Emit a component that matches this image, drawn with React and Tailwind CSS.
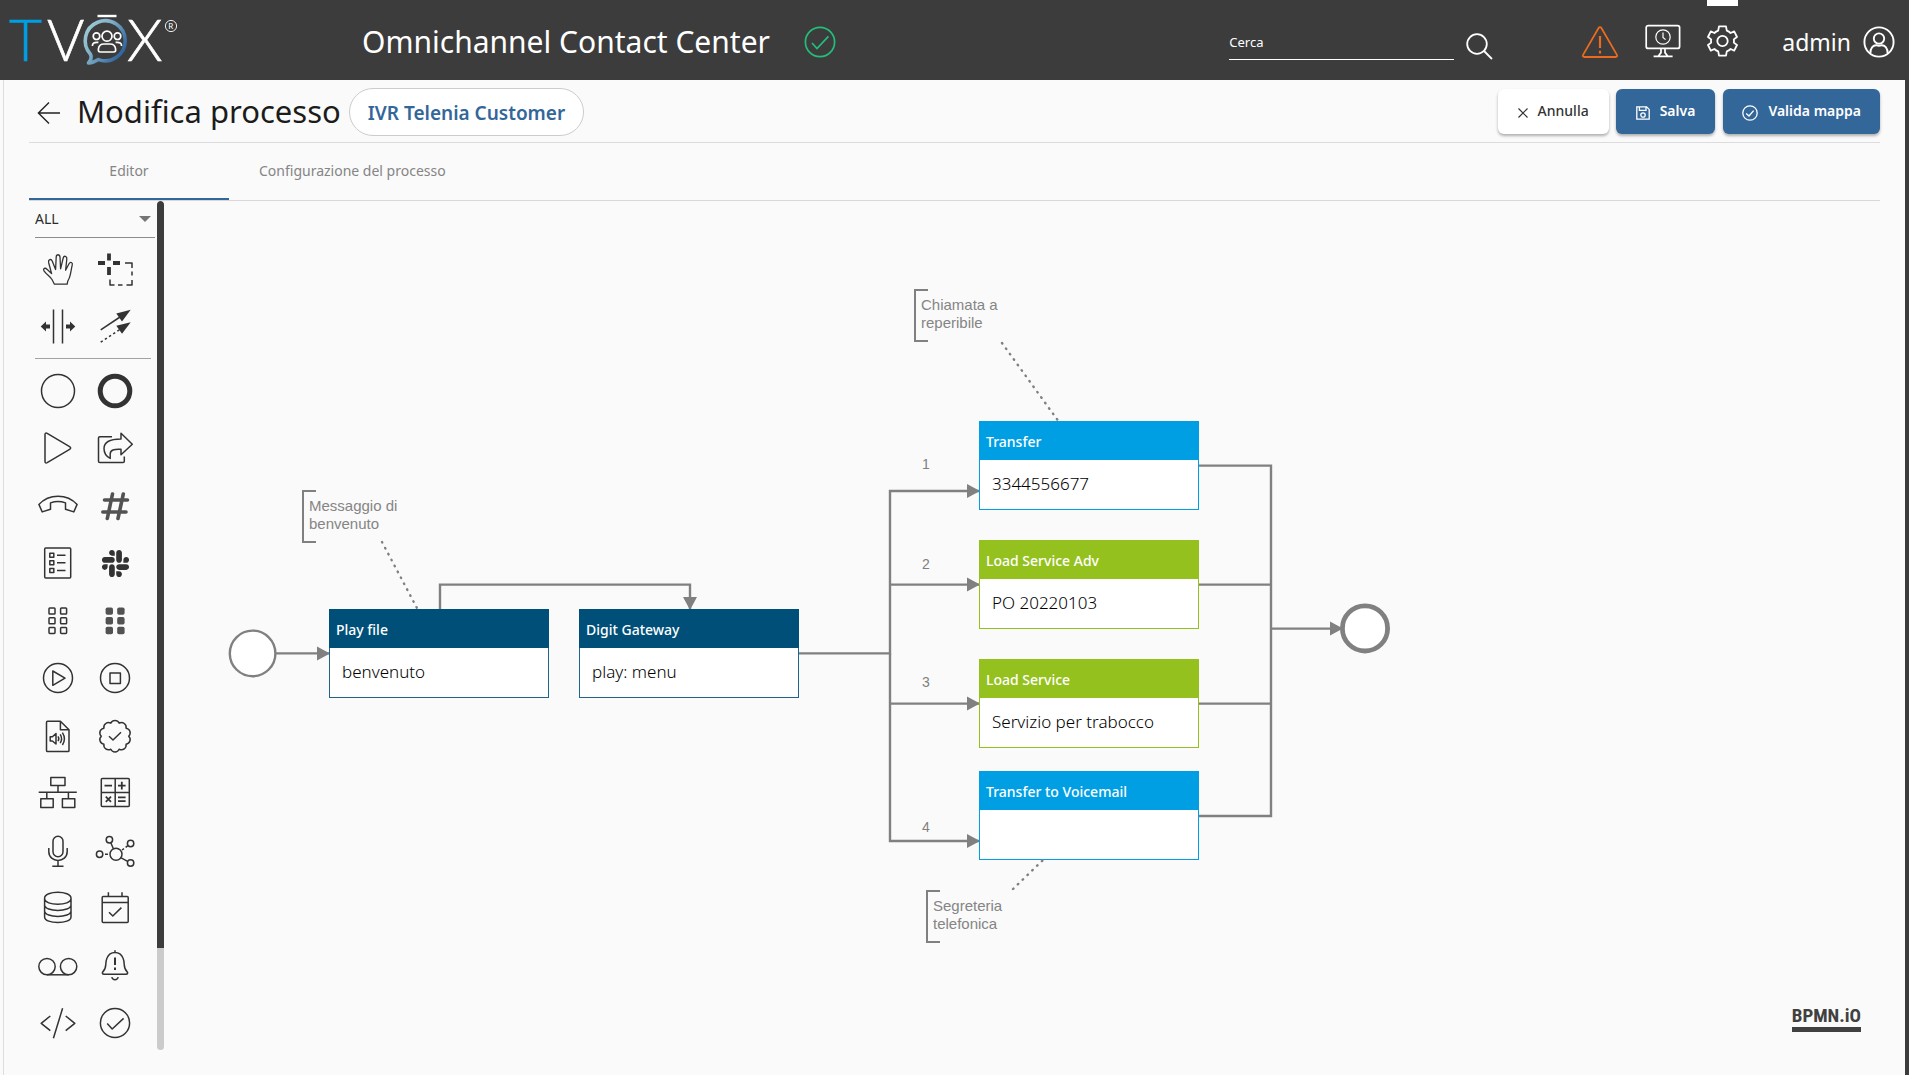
import React from "react";
import { FaSlack } from "react-icons/fa";

const INK = "#333333";

function Glyph({ children, width = 1.5 }) {
  return (
    <svg
      width="40"
      height="40"
      viewBox="0 0 40 40"
      fill="none"
      stroke={INK}
      strokeWidth={width}
      strokeLinejoin="round"
      aria-hidden="true"
    >
      {children}
    </svg>
  );
}

function scallop(cx, cy, r, bumps, arc) {
  const pts = Array.from({ length: bumps }, (_, i) => {
    const a = ((i + 0.5) / bumps) * Math.PI * 2 - Math.PI / 2;
    return `${(cx + r * Math.cos(a)).toFixed(2)} ${(cy + r * Math.sin(a)).toFixed(2)}`;
  });
  return `M${pts[bumps - 1]}` + pts.map((p) => `A${arc} ${arc} 0 0 1 ${p}`).join("") + "Z";
}

const TOOLS = [
  [
    "Mano",
    <Glyph width={1.3}>
      <path d="M16.4 34.2L14 29.5C12 26.5 8.5 24.5 6 20.8C4.8 18.4 7.2 17.4 9 19.2L13.6 23.6L10.6 12.5C10 9.5 13 8.4 14.2 11L17.6 19.5L18.2 7C18.4 4 21.6 4 22 7L22.6 18.8L25.2 8C26 5.2 29.2 6 28.8 9L27.6 20.2L31 13.8C32.4 11.2 35 12.4 34.2 15.2C33 20 32.6 26 30.8 29C29.4 31 29.4 32.4 29.2 34.2Z" />
    </Glyph>,
  ],
  [
    "Lazo",
    <Glyph>
      <path d="M3 13H10M18 13H25M14 3.5V10.5M14 17V25" strokeWidth="3.8" />
      <path d="M30 13H37V18M37 21.5V25.5M37 30V35H31.5M27.5 35H23M19.5 35H15V29.5" />
    </Glyph>,
  ],
  [
    "Spazio",
    <Glyph>
      <path d="M15.5 2.5V36.5M24.5 2.5V36.5" />
      <path d="M2.7 19.5L8 14.5V17.6H12V21.4H8V24.5ZM37.3 19.5L32 14.5V17.6H28V21.4H32V24.5Z" fill={INK} stroke="none" />
    </Glyph>,
  ],
  [
    "Connetti",
    <Glyph>
      <path d="M5.7 22.8L25 10" />
      <path d="M5.7 35.2L25 22.4" strokeDasharray="2.4 2.6" />
      <path d="M35.7 2.8L21.3 6.5L27 14.5ZM35.7 15.2L21.3 18.8L27 26.8Z" fill={INK} stroke="none" />
    </Glyph>,
  ],
];

const ELEMENTS = [
  ["Inizio", <Glyph><circle cx="20" cy="20" r="16.5" /></Glyph>],
  ["Fine", <Glyph><circle cx="20" cy="20" r="14.8" strokeWidth="5" /></Glyph>],
  [
    "Avvia",
    <Glyph><path d="M7 6.5C7 5 8 4.8 9.2 5.4L31.6 18.6C33 19.5 33 20.5 31.6 21.3L9.2 34.6C8 35.2 7 35 7 33.5Z" /></Glyph>,
  ],
  [
    "Trasferisci",
    <Glyph>
      <path d="M17 8.8H4.8Q3.5 8.8 3.5 10V33.2Q3.5 34.5 4.8 34.5H28Q29.3 34.5 29.3 33.2V28.4" />
      <path d="M26 5.3L37.3 16.2L26 26.8V21.2C19 20.8 15.2 22 15.2 26V30.4C11.6 28.6 9 25 9 20.5C9 14 14.5 11 26 11Z" />
    </Glyph>,
  ],
  [
    "Riaggancia",
    <Glyph><path d="M0.9 18.4C11 7.4 29 7.4 39.1 18.4L35.8 25.9L27.5 23.2V16.9C22.5 15 17.5 15 12.5 16.9V23.2L4.2 25.9Z" /></Glyph>,
  ],
  [
    "Cifra",
    <Glyph><path d="M17.5 8L12.3 32.5M28.3 8L23 32.5M9.5 14H32.5M7.8 26H31" stroke="#525252" strokeWidth="3.6" strokeLinecap="round" /></Glyph>,
  ],
  [
    "Elenco",
    <Glyph>
      <rect x="6.7" y="5" width="26" height="30" rx="1" />
      <path d="M11.8 10.2h4v4h-4zM11.8 17.8h4v4h-4zM11.8 25.4h4v4h-4zM19 12.2H27.5M19 19.8H27.5M19 27.4H27.5" />
    </Glyph>,
  ],
  ["Slack", <FaSlack size={31} color={INK} aria-hidden="true" />],
  [
    "Tastiera",
    <Glyph>
      {[7, 16.7, 26.4].flatMap((y) =>
        [11, 22.6].map((x) => <rect key={`${x}-${y}`} x={x} y={y} width="6" height="6" rx="0.8" />)
      )}
    </Glyph>,
  ],
  [
    "Tastiera piena",
    <Glyph>
      {[6.4, 16.1, 25.8].flatMap((y) =>
        [10.6, 22.2].map((x) => (
          <rect key={`${x}-${y}`} x={x} y={y} width="7.4" height="7.4" rx="1.8" fill="#525252" stroke="none" />
        ))
      )}
    </Glyph>,
  ],
  ["Riproduci", <Glyph><circle cx="20" cy="20" r="14.5" /><path d="M14.8 13L27 20.2L14.8 27.3Z" /></Glyph>],
  ["Ferma", <Glyph><circle cx="20" cy="20" r="14.5" /><path d="M15 15h10.4v10.4h-10.4z" /></Glyph>],
  [
    "File audio",
    <Glyph>
      <path d="M22.4 5.3H9.6Q8.5 5.3 8.5 6.4V34.4Q8.5 35.5 9.6 35.5H30Q31 35.5 31 34.4V13.8ZM22.4 5.3V13.8H31" />
      <path d="M12.2 20.8H14.4L18 17.6V28L14.4 25H12.2ZM20 20.4Q21.6 22.8 20 25.2M22.2 18.4Q25 22.8 22.2 27.2M24.4 16.6Q28.4 22.8 24.4 29" />
    </Glyph>,
  ],
  ["Verifica", <Glyph><path d={scallop(20, 20.2, 13.7, 10, 4.7)} /><path d="M14 20.2L18 24L26 16.2" /></Glyph>],
  [
    "Gerarchia",
    <Glyph>
      <path d="M12.8 4.6H27V12.6H12.8ZM20 12.6V19.3M0.7 19.3H38.8M8.8 19.3V25.8M30.4 19.3V25.8M2.8 25.8H15.2V34.6H2.8ZM24.4 25.8H36.8V34.6H24.4Z" />
    </Glyph>,
  ],
  [
    "Calcola",
    <Glyph>
      <rect x="6.3" y="5.5" width="28" height="28" rx="1" />
      <path d="M20.2 5.5V33.5M6.3 19.4H34.3" />
      <path d="M9.5 12.6H17M23 12.6H30.6M26.8 8.8V16.4M10.8 23.6L16 28.8M16 23.6L10.8 28.8M23 24.4H30.6M23 28.2H30.6" strokeWidth="1.8" />
    </Glyph>,
  ],
  [
    "Registra",
    <Glyph>
      <rect x="15" y="5.3" width="10" height="20.4" rx="5" />
      <path d="M10.8 17V20.4C10.8 32.4 29.2 32.4 29.2 20.4V17M20 29.3V35M14.3 35.2H25.5" />
    </Glyph>,
  ],
  [
    "Rete",
    <Glyph>
      <circle cx="21" cy="23.3" r="6" />
      <circle cx="14.4" cy="8.8" r="3.2" />
      <circle cx="35.6" cy="12.5" r="3.2" />
      <circle cx="4.6" cy="23.3" r="3.2" />
      <circle cx="35.6" cy="32" r="3.2" />
      <path d="M15.8 11.8L18.4 17.8M27 19L29 17.6M30.6 16.4L32.6 14.8M26.2 26.8L32.6 30.4M10 23.3H13" />
    </Glyph>,
  ],
  [
    "Database",
    <Glyph>
      <path d="M6.6 10.2C6.6 2.4 33 2.4 33 10.2V29C33 36.4 6.6 36.4 6.6 29ZM6.6 10.6C6.6 18.2 33 18.2 33 10.6M6.6 17C6.6 24.2 33 24.2 33 17M6.6 23C6.6 30.2 33 30.2 33 23" />
    </Glyph>,
  ],
  [
    "Calendario",
    <Glyph>
      <rect x="7.2" y="8.4" width="26" height="26" rx="1" />
      <path d="M7.2 14.4H33.2M13.4 4.3V8.4M27 4.3V8.4M14 24.2L17.8 28L26.4 19.6" />
    </Glyph>,
  ],
  [
    "Segreteria",
    <Glyph><circle cx="9" cy="20.6" r="8.2" /><circle cx="30.6" cy="20.6" r="8.2" /><path d="M9 28.8H30.6" /></Glyph>,
  ],
  [
    "Avviso",
    <Glyph>
      <path d="M20 4.3V6.4M9 28.2C7.4 28.2 6.8 26.8 8 25.6C12.4 21.4 9.6 17.6 12 12C13.4 8.4 16 6.4 20 6.4C24 6.4 26.6 8.4 28 12C30.4 17.6 27.6 21.4 32 25.6C33.2 26.8 32.6 28.2 31 28.2ZM16.8 31.2C17.6 34.6 22.4 34.6 23.2 31.2" />
      <path d="M20 11.6V19M20 21.4V24" strokeWidth="2" />
    </Glyph>,
  ],
  ["Codice", <Glyph><path d="M12.3 13L3.2 20.3L12.3 27.7M27.7 13L36.8 20.3L27.7 27.7M24.6 5.3L15.4 35.3" /></Glyph>],
  ["Completato", <Glyph><circle cx="20" cy="20" r="14.6" /><path d="M12.2 20.6L17.2 26L28.6 15.4" /></Glyph>],
];

function Palette({ items, className }) {
  return (
    <div className={`grid grid-cols-[58px_56px] ${className}`}>
      {items.map(([label, icon]) => (
        <button key={label} type="button" aria-label={label} className="flex items-center justify-center">
          {icon}
        </button>
      ))}
    </div>
  );
}

function Logo() {
  return (
    <svg width="180" height="80" viewBox="0 -10 180 80" role="img" aria-label="TVox">
      <defs>
        <linearGradient id="bubble" x1="0" y1="0" x2="1" y2="0.7">
          <stop offset="0" stopColor="#a5d0d6" />
          <stop offset="0.45" stopColor="#7fb0c8" />
          <stop offset="1" stopColor="#2d629c" />
        </linearGradient>
      </defs>
      <g fontFamily="Lato, sans-serif" fontWeight="300" fontSize="57" fill="#ffffff" stroke="#ffffff" strokeWidth="0.6">
        <text x="9" y="51" fill="#009fe3" stroke="#009fe3">T</text>
        <text x="47" y="51">V</text>
        <text x="127" y="51">X</text>
      </g>
      <path d="M97.5 6H116.5" stroke="#ffffff" strokeWidth="2.4" />
      <path
        d="M88.5 53C91 50 92 47.5 90.6 44.4A20 20 0 1 1 98.5 49.6C95.5 51.5 92 53.2 88.5 53Z"
        fill="none"
        stroke="url(#bubble)"
        strokeWidth="3.6"
        strokeLinejoin="round"
      />
      <g fill="none" stroke="#ffffff" strokeWidth="1.7">
        <circle cx="107" cy="26.2" r="5" />
        <circle cx="96.5" cy="26.2" r="3.3" />
        <circle cx="117.5" cy="26.2" r="3.3" />
        <path d="M100.4 42C98.6 42 98.2 41 98.4 39C98.8 35.4 100.6 34 104 34H110C113.4 34 115.2 35.4 115.6 39C115.8 41 115.4 42 113.6 42ZM92.4 36C92.4 33 94 32 98.4 32.4M121.6 36C121.6 33 120 32 115.6 32.4" />
      </g>
      <circle cx="171" cy="16" r="5.6" fill="none" stroke="#ffffff" strokeWidth="0.9" />
      <text x="168.2" y="19" fontFamily="Lato, sans-serif" fontSize="8" fill="#ffffff">R</text>
    </svg>
  );
}

function TopBar() {
  return (
    <header className="flex h-20 shrink-0 items-center bg-[#3c3c3c] pr-3.5 text-white">
      <a href="#home"><Logo /></a>
      <div className="mt-1 ml-[182px] flex items-center gap-[34px]">
        <h1 className="text-[30px] leading-10 whitespace-nowrap">Omnichannel Contact Center</h1>
        <svg width="32" height="32" viewBox="0 0 32 32" fill="none" stroke="#22bf7c" strokeWidth="1.7" aria-label="Attivo">
          <circle cx="16" cy="16" r="14.6" />
          <path d="M8 17L13 22.6L24.4 10.4" />
        </svg>
      </div>
      <form className="mt-2 ml-auto flex items-center gap-3" onSubmit={(e) => e.preventDefault()}>
        <input
          type="search"
          aria-label="Cerca"
          placeholder="Cerca"
          className="mb-1 h-9 w-[225px] border-b border-white bg-transparent text-[13px] text-white outline-none placeholder:text-white"
        />
        <button type="submit" aria-label="Avvia ricerca" className="mt-1">
          <svg width="27" height="27" viewBox="0 0 27 27" fill="none" stroke="#ffffff" strokeWidth="1.8">
            <circle cx="11" cy="11" r="9.8" />
            <path d="M18 18L26 26" />
          </svg>
        </button>
      </form>
      <nav className="ml-[88px] flex h-full items-center">
        <button type="button" aria-label="Avvisi" className="mt-1 mr-[26px]">
          <svg width="38" height="34" viewBox="0 0 38 34" fill="none" stroke="#ea6a1f" strokeWidth="1.8" strokeLinejoin="round">
            <path d="M17.6 3C18.3 1.7 19.7 1.7 20.4 3L35.8 29.6C36.6 31 36 32 34.6 32H3.4C2 32 1.4 31 2.2 29.6Z" />
            <path d="M19 11V23M19 25.8V28.6" strokeWidth="2.2" />
          </svg>
        </button>
        <button type="button" aria-label="Monitor" className="mt-0.5 mr-[26px]">
          <svg width="36" height="34" viewBox="0 0 36 34" fill="none" stroke="#ffffff" strokeWidth="1.7">
            <rect x="1.2" y="1.6" width="33.4" height="22.8" rx="2" />
            <circle cx="18" cy="13" r="7.2" strokeWidth="1.2" />
            <path d="M18 8.4V13.4L20.6 15.6" strokeWidth="1.2" />
            <path d="M16 25V28.6L13.4 32M20 25V28.6L22.6 32M8.6 32.3H27.6" />
          </svg>
        </button>
        <div className="relative mr-11 flex h-full items-center">
          <span className="absolute inset-x-0 top-0 h-1.5 bg-white" />
          <button type="button" aria-label="Impostazioni" className="mt-0.5">
            <svg width="31" height="32" viewBox="0 0 31 32" fill="none" stroke="#ffffff" strokeWidth="1.8" strokeLinejoin="round">
              <circle cx="15.5" cy="16" r="5.2" />
              <path d="M12 1.4H19L19.8 5.6Q22 6.4 23.6 8L27.2 6.4L30 12L26.8 14.4Q27.2 16 26.8 17.6L30 20L27.2 25.6L23.6 24Q22 25.6 19.8 26.4L19 30.6H12L11.2 26.4Q9 25.6 7.4 24L3.8 25.6L1 20L4.2 17.6Q3.8 16 4.2 14.4L1 12L3.8 6.4L7.4 8Q9 6.4 11.2 5.6Z" />
            </svg>
          </button>
        </div>
        <button type="button" className="mt-1 flex items-center gap-3">
          <span className="text-[23px] leading-8">admin</span>
          <svg width="32" height="32" viewBox="0 0 32 32" fill="none" stroke="#ffffff" strokeWidth="1.9">
            <circle cx="16" cy="16" r="14.6" />
            <circle cx="16" cy="12.6" r="5.2" />
            <path d="M7.4 27.4C7.2 21.6 10.4 19 13.4 19.2Q16 20.6 18.6 19.2C21.6 19 24.8 21.6 24.6 27.4" />
          </svg>
        </button>
      </nav>
    </header>
  );
}

function TitleBar() {
  const action = "flex h-[45px] items-center rounded-md text-sm shadow-[0_2px_3px_rgba(0,0,0,0.3)]";
  return (
    <div className="flex h-[63px] shrink-0 items-center border-b border-[#dcdcdc]">
      <button type="button" aria-label="Indietro" className="mt-1 ml-2">
        <svg width="24" height="24" viewBox="0 0 24 24" fill="none" stroke="#222222" strokeWidth="1.4">
          <path d="M23 12H1.4M12 1.4L1.4 12L12 22.6" />
        </svg>
      </button>
      <h2 className="ml-4 text-[31px] leading-10 whitespace-nowrap text-[#1c1c1c]">Modifica processo</h2>
      <span className="mt-0.5 ml-2 flex h-12 items-center rounded-full border border-[#cccccc] bg-white px-[18px] pt-0.5 text-[19px] font-semibold whitespace-nowrap text-[#336699]">
        IVR Telenia Customer
      </span>
      <div className="ml-auto flex items-center">
        <button type="button" className={`${action} gap-2.5 bg-white px-5 font-medium text-[#333333]`}>
          <svg width="10" height="10" viewBox="0 0 10 10" stroke="#333333" strokeWidth="1.2" className="mt-1">
            <path d="M0.5 0.5L9.5 9.5M9.5 0.5L0.5 9.5" />
          </svg>
          Annulla
        </button>
        <button type="button" className={`${action} ml-[7px] gap-2.5 bg-[#336699] px-5 font-semibold text-white`}>
          <svg width="14" height="14" viewBox="0 0 14 14" fill="none" stroke="#ffffff" strokeWidth="1.3" className="mt-1">
            <path d="M0.8 0.8H10.6L13.2 3.4V13.2H0.8ZM3.4 0.8V4.4H10V0.8" />
            <circle cx="7" cy="9" r="2.2" />
          </svg>
          Salva
        </button>
        <button type="button" className={`${action} ml-2 gap-2.5 bg-[#336699] px-[19px] font-semibold text-white`}>
          <svg width="16" height="16" viewBox="0 0 16 16" fill="none" stroke="#ffffff" strokeWidth="1.3" className="mt-1">
            <circle cx="8" cy="8" r="7.2" />
            <path d="M4.2 8.4L7 11L11.6 5.6" />
          </svg>
          Valida mappa
        </button>
      </div>
    </div>
  );
}

function Sidebar() {
  return (
    <aside className="flex shrink-0">
      <div className="flex w-32 flex-col">
        <div className="relative mr-0.5 ml-1.5 flex h-[37px] shrink-0 items-center border-b border-[#8c8c8c]">
          <select aria-label="Categoria" className="h-full w-full appearance-none bg-transparent text-sm text-[#2c2c2c] outline-none">
            <option>ALL</option>
          </select>
          <svg width="12" height="6" viewBox="0 0 12 6" className="pointer-events-none absolute right-1">
            <path d="M0 0H12L6 6Z" fill="#757575" />
          </svg>
        </div>
        <Palette items={TOOLS} className="mt-[3px] shrink-0 auto-rows-[57px]" />
        <hr className="mt-[3px] mr-1.5 mb-[3px] ml-1.5 border-t border-[#a3a3a3]" />
        <Palette items={ELEMENTS} className="min-h-[600px] flex-1 auto-rows-fr" />
      </div>
      <div className="mb-0.5 w-[7px] overflow-hidden rounded-full bg-[#cbcbcb]">
        <div className="h-[88%] rounded-t-full bg-[#3c3c3c]" />
      </div>
    </aside>
  );
}

const NODES = [
  { x: 165, y: 408, title: "Play file", body: "benvenuto", tone: "border-[#004f78] bg-[#004f78]", line: "border-[#1f648a]" },
  { x: 415, y: 408, title: "Digit Gateway", body: "play: menu", tone: "border-[#004f78] bg-[#004f78]", line: "border-[#1f648a]" },
  { x: 815, y: 220, title: "Transfer", body: "3344556677", tone: "border-[#009fe3] bg-[#009fe3]", line: "border-[#009fe3]" },
  { x: 815, y: 339, title: "Load Service Adv", body: "PO 20220103", tone: "border-[#95c11f] bg-[#95c11f]", line: "border-[#95c11f]" },
  { x: 815, y: 458, title: "Load Service", body: "Servizio per trabocco", tone: "border-[#95c11f] bg-[#95c11f]", line: "border-[#95c11f]" },
  { x: 815, y: 570, title: "Transfer to Voicemail", body: "", tone: "border-[#009fe3] bg-[#009fe3]", line: "border-[#009fe3]" },
];

const NOTES = [
  { x: 138, y: 289, lines: ["Messaggio di", "benvenuto"] },
  { x: 750, y: 88, lines: ["Chiamata a", "reperibile"] },
  { x: 762, y: 689, lines: ["Segreteria", "telefonica"] },
];

const BRANCHES = [
  { label: "1", x: 756, y: 254 },
  { label: "2", x: 756, y: 354 },
  { label: "3", x: 756, y: 472 },
  { label: "4", x: 756, y: 617 },
];

function Diagram() {
  return (
    <section className="relative min-w-0 flex-1 overflow-hidden" aria-label="Mappa del processo">
      <svg width="1300" height="800" viewBox="0 0 1300 800" fill="none" stroke="#808080" strokeWidth="2.4" className="absolute top-0 left-0 max-w-none">
        <defs>
          <marker id="arrow" viewBox="0 0 14 16" refX="13" refY="8" markerWidth="14" markerHeight="16" markerUnits="userSpaceOnUse" orient="auto">
            <path d="M0 1L13 8L0 15Z" fill="#808080" stroke="none" />
          </marker>
        </defs>
        <g markerEnd="url(#arrow)">
          <path d="M112 452.4H166" />
          <path d="M276 408V383.6H526V409" />
          <path d="M635 452.4H726V290H816" />
          <path d="M726 383.6H816" />
          <path d="M726 502.6H816" />
          <path d="M726 452.4V640H816" />
          <path d="M1107 427.6H1179" />
        </g>
        <path d="M1034 264.6H1107V615H1034M1034 383.6H1107M1034 502.6H1107" />
        <circle cx="88.6" cy="452.4" r="22.8" fill="#ffffff" />
        <circle cx="1201" cy="427.4" r="22.6" fill="#ffffff" strokeWidth="4.8" />
      </svg>
      {NODES.map((n) => (
        <article key={n.title} className={`absolute h-[89px] w-[220px] border bg-white ${n.line}`} style={{ left: n.x, top: n.y }}>
          <h3 className={`-mx-px -mt-px flex h-[39px] items-center border px-1.5 pt-0.5 text-sm font-medium text-white ${n.tone}`}>{n.title}</h3>
          <p className="px-3 pt-3 text-[17px] leading-6 font-light text-black">{n.body}</p>
        </article>
      ))}
      {NOTES.map((n) => (
        <div key={n.lines[0]} className="absolute h-[53px] whitespace-nowrap" style={{ left: n.x, top: n.y }}>
          <div className="h-full w-3.5 border-2 border-r-0 border-[#808080]" />
          <p className="absolute top-[7px] left-[7px] font-['Liberation_Sans',Arial,sans-serif] text-[15px] leading-[18px] text-[#858585]">
            {n.lines[0]}
            <br />
            {n.lines[1]}
          </p>
        </div>
      ))}
      {BRANCHES.map((b) => (
        <span
          key={b.label}
          className="absolute w-3 text-center font-['Liberation_Sans',Arial,sans-serif] text-sm leading-[18px] text-[#808080]"
          style={{ left: b.x, top: b.y }}
        >
          {b.label}
        </span>
      ))}
      <svg width="1300" height="800" viewBox="0 0 1300 800" fill="none" stroke="#808080" strokeWidth="2.4" strokeLinecap="round" strokeDasharray="0.6 6.1" className="pointer-events-none absolute top-0 left-0 max-w-none">
        <path d="M218 341L254 409" />
        <path d="M838 142L895 221" />
        <path d="M849 688L880 658" />
      </svg>
      <a
        href="#bpmn"
        className="absolute right-[19px] bottom-5 border-b-[5px] border-[#404040] font-['Roboto_Condensed','Liberation_Sans_Narrow',Roboto,sans-serif] text-[19px] leading-[22px] font-bold text-[#404040]"
      >
        BPMN.iO
      </a>
    </section>
  );
}

export default function App() {
  return (
    <div className="flex min-h-screen flex-col bg-[#fafafa] font-['Noto_Sans','Open_Sans',sans-serif]">
      <TopBar />
      <div className="flex flex-1 border-r-4 border-[#3c3c3c] pl-[3px]">
        <main className="flex min-w-0 flex-1 flex-col border-l border-[#dddddd] pr-[25px] pb-[23px] pl-[25px]">
          <TitleBar />
          <div role="tablist" className="flex h-[58px] shrink-0 border-b border-[#d8d8d8] text-sm text-[#858585]">
            <button type="button" role="tab" aria-selected="true" className="w-[200px] border-b-2 border-[#336699]">
              Editor
            </button>
            <button type="button" role="tab" aria-selected="false" className="border-b-2 border-transparent px-[30px]">
              Configurazione del processo
            </button>
          </div>
          <div className="flex min-h-0 flex-1">
            <Sidebar />
            <Diagram />
          </div>
        </main>
      </div>
    </div>
  );
}
